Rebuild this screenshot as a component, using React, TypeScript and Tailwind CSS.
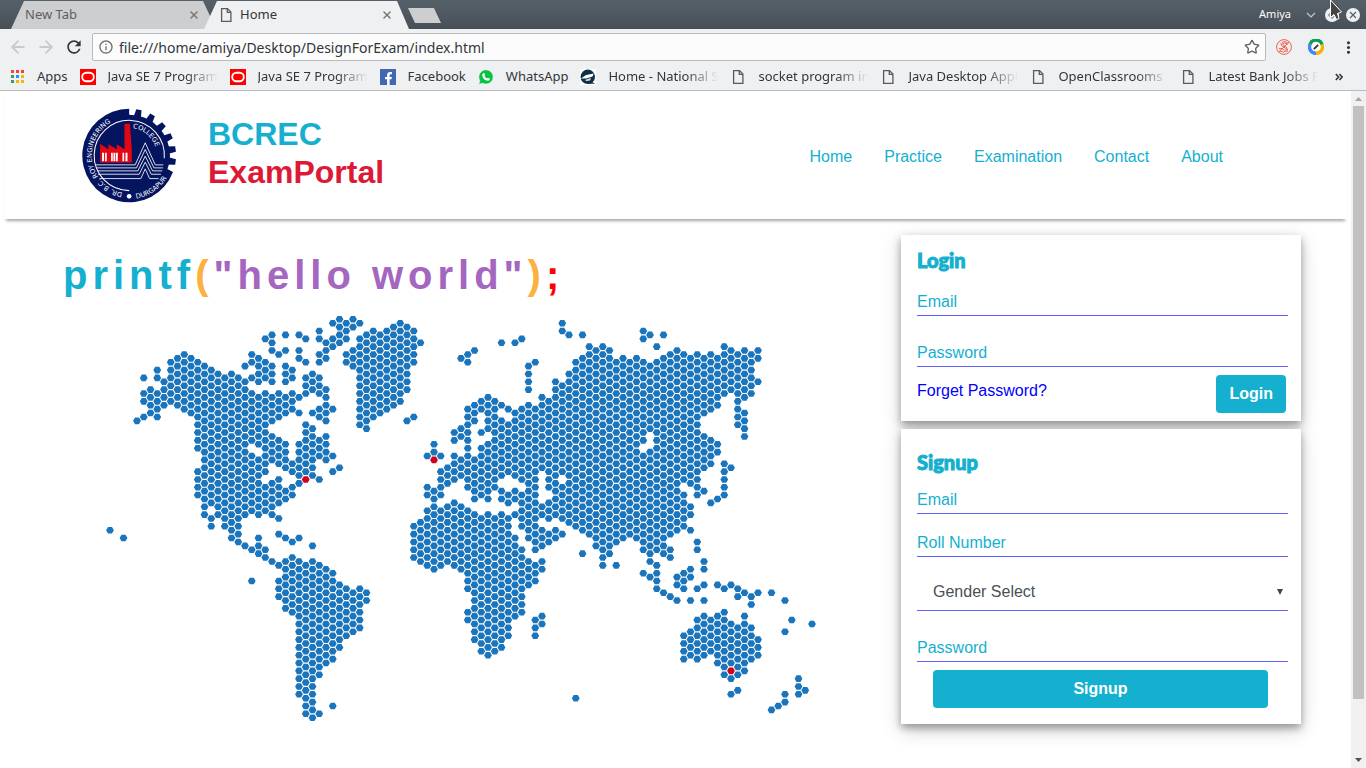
import type { ReactNode } from "react";
import { ArrowLeft, ArrowRight, Star, X } from "lucide-react";
import { FaFacebookF } from "react-icons/fa";
import { MdInfoOutline, MdRefresh, MdMoreVert } from "react-icons/md";

/* Map cells by column: "column: from-to" half rows, stepping by two. */
const LAND = `
0:54;2:56;4:26;5:15,19-21,25;6:18-24;7:13-15,19-25;8:16-22;9:11-21;10:10-22;11:9-23;12:10-24;
13:11-33,39-45;14:12-50;15:13-47,51-53;16:14-50;17:15-53;18:14-56;19:15-57;20:12,16-50,58;
21:9-11,15,19-31,35-49,59,67;22:10-16,20-32,36-50,56-60;23:5,11-15,19-39,43-49,59-61;
24:4-8,12-16,20-26,30-36,42-50,62;25:9,19-25,31-37,41-47,51,55,63,67-71;
26:4,8,12-16,20-24,32-38,44-46,56,62-74;27:13-15,19-23,37-39,43-45,57,61-75;
28:4,8-10,20,24,32-42,56,62-96;29:5,11,15-19,27-39,63-101;30:14-18,24,28-40,58,62-102;
31:3-5,9-11,15-19,23-25,31-35,41,63-91,101;32:6-10,18-26,30-36,64-88;33:1,5-7,23,35,39,65-87,99;
34:0-6,38,68-84;35:1-5,9-11,69-81;36:0-2,8-12,70-80;37:1,5-27,69-79;38:4-28,70-72;39:3-25;40:4-24;
41:3-23;42:2-22;43:1-21;44:2-18,26;45:3-11,25,53-61;46:6,52-62;47:35,43-45,49-63;48:32-34,44-64;
49:35,39-45,49-63;50:38-42,48-62;51:29-31,35-41,47-63;52:10,28-30,36-40,48-64;
53:9-11,23-43,49-69,75-77;54:8,22-26,36-46,50-82;55:21-23,29,33-45,51-85;56:20-28,32-46,50-86;
57:21-43,51-85;58:6,22,26-40,44-46,50-84;59:23,27-39,45-47,51-81;60:6,24-40,44-46,50,56-76;
61:5,23-41,45-53,59-75;62:12-18,22-56,62-68;63:11,23-59,63-67,77-81;64:20-38,48-50,54-58,62-64,76-78;
65:21-43,47-51,55-57;66:16-50,54-56;67:1-3,17-39,43-51,55;68:4,14-52;69:11-53,97;70:4,10-54,60;71:7-55;
72:8-58;73:7-63;74:8-60;75:11-57,63;76:10-56;77:11-55;78:10-56;79:3-5,11-31,35-59,65;
80:4,12-28,34-62,66;81:7,11-59,63-69;82:4,10-60,70;83:9-55,59-61,71;84:8-54,66-68,72;
85:9-41,45-53,65-69,81-87;86:10-42,48-50,54,64-66,72,80-86;87:9-41,43-45,57-59,69,77-87;
88:10-24,30-38,44,62-64,68,72,76-86;89:9-23,31-37,47,77-85;90:10-22,32-34,46,68,76-88;
91:7-19,37-45,69,75-91;92:8-18,38,68,78-88,92,96;93:9-27,69-71,79-91,95;94:8-20,24-30,70,76-90;
95:9-19,71-73,79-87;96:8-10,16,70,82-86;98:70,100;99:99;100:72,80,96-98;101:77;102:92-96;103:95;104:78`;

const CITIES: [number, number][] = [
  [29, 41],
  [48, 36],
  [92, 90],
];

const cell = (col: number, half: number) => {
  const x = (4 + col * 6.75).toFixed(2);
  const y = (4.3 + half * 3.906).toFixed(2);
  return `M${x} ${y}m-3.9 0l1.9 -3.3h4l1.9 3.3l-1.9 3.3h-4z`;
};

const landPath = LAND.replace(/\s/g, "")
  .split(";")
  .flatMap((entry) => {
    const [col, runs] = entry.split(":");
    return runs.split(",").flatMap((run) => {
      const [from, to = from] = run.split("-").map(Number);
      const cells: string[] = [];
      for (let half = from; half <= to; half += 2) cells.push(cell(Number(col), half));
      return cells;
    });
  })
  .join("");

function WorldMap() {
  return (
    <svg viewBox="0 0 710 408" className="block w-full" role="img" aria-label="World map">
      <path d={landPath} fill="#1b75bc" />
      <path d={CITIES.map(([c, h]) => cell(c, h)).join("")} fill="#d0021b" />
    </svg>
  );
}

const TEETH = [-78, -60, -42, -25, -8, 8];

function CollegeLogo() {
  return (
    <svg viewBox="0 0 284 284" className="size-[95px] shrink-0" role="img" aria-label="College logo">
      <g fill="#04145f">
        <circle cx="141" cy="142" r="122" />
        <path d="M141 2A140 140 0 1 0 272 191L255 182L141 142Z" />
        {TEETH.map((a) => (
          <path key={a} d="M250 130L281 134V150L250 154Z" transform={`rotate(${a} 141 142)`} />
        ))}
      </g>
      <path d="M141 247A105 105 0 1 1 246 150" fill="none" stroke="#fff" strokeWidth="3" />
      <circle cx="141" cy="264" r="7" fill="#fff" />
      <g fill="none" stroke="#fff" strokeWidth="2.5">
        <path d="M42 170H159L189 104L219 170H243" />
        <path d="M43 179H163L189 124L215 179H242" />
        <path d="M45 188H167L189 144L211 188H240" />
        <path d="M48 198H171L189 162L207 198H236" />
        <path d="M52 211H176L189 182L202 211H229" />
      </g>
      <path
        d="M54 163V107L79 123V108L104 123V108L127 123V47H143L149 125V163Z"
        fill="#e30613"
      />
      <path
        d="M60 134h6v25h-6zM69 134h5v25h-5zM87 134h5v25h-5zM94 134h5v25h-5zM101 134h6v25h-6zM121 134h5v25h-5zM130 134h6v25h-6z"
        fill="#fff"
      />
      <path id="ring-left" d="M121 253A113 113 0 0 1 141 29" fill="none" />
      <path id="ring-inner" d="M152 60A83 83 0 0 1 224 142" fill="none" />
      <path id="ring-low" d="M162 271A131 131 0 0 0 270 164" fill="none" />
      <g fill="#fff" className="font-['DejaVu_Sans']">
        <text fontSize="20">
          <textPath href="#ring-left">DR. B.C. ROY ENGINEERING</textPath>
        </text>
        <text fontSize="20">
          <textPath href="#ring-inner">COLLEGE</textPath>
        </text>
        <text fontSize="20">
          <textPath href="#ring-low">DURGAPUR</textPath>
        </text>
      </g>
    </svg>
  );
}

function PageIcon() {
  return (
    <svg viewBox="0 0 16 16" className="size-4 shrink-0" fill="none" stroke="#5a5a5a" strokeWidth="1.3">
      <path d="M3.6 1.6H9.5L12.9 5V14.4H3.6Z" />
      <path d="M9.3 1.8V5.3H12.7" />
    </svg>
  );
}

function OracleIcon() {
  return (
    <svg viewBox="0 0 16 16" className="size-4 shrink-0">
      <path d="M0 0H16V16H0Z" fill="#f00" />
      <rect x="2.2" y="3.8" width="11.6" height="8.4" rx="4.2" fill="none" stroke="#fff" strokeWidth="1.9" />
    </svg>
  );
}

function FacebookIcon() {
  return (
    <span className="flex size-4 shrink-0 items-end justify-end overflow-hidden bg-[#4267b2] pr-px">
      <FaFacebookF className="size-[13px] text-white" />
    </span>
  );
}

function WhatsAppIcon() {
  return (
    <svg viewBox="0 0 16 16" className="size-4 shrink-0">
      <path d="M8 .7A7.2 7.2 0 0 1 8 15.1Q6 15.1 4.5 14.3L.7 15.4L1.8 11.7A7.3 7.3 0 0 1 8 .7Z" fill="#0ac144" stroke="#fff" strokeWidth=".6" />
      <path d="M5.3 4.2L6.3 4.1L7.1 6L6.4 6.9Q7.3 8.7 9.2 9.5L10 8.7L11.9 9.7Q12 11.5 10 11.8Q5 11.3 4.2 6.3Q4.3 4.8 5.3 4.2Z" fill="#fff" />
    </svg>
  );
}

function ScholarIcon() {
  return (
    <svg viewBox="0 0 16 16" className="size-4 shrink-0">
      <path d="M0 0H16V16H0Z" fill="#fff" />
      <circle cx="7.8" cy="7.8" r="7.2" fill="#0c3044" />
      <path d="M10 12L15.3 14.8H8Z" fill="#0c3044" />
      <path d="M1 9.5L6 6L13.8 4.4L12.5 7.4L6.5 9.6Z" fill="#fff" />
      <path d="M5 11L11 9L10 11.5L6.5 12Z" fill="#dfe6ea" />
    </svg>
  );
}

function AppsIcon() {
  const colors = ["#f44336", "#f44336", "#f44336", "#34a05a", "#2090ff", "#ffb300", "#34a05a", "#ffb300", "#ffb300"];
  return (
    <svg viewBox="0 0 16 16" className="size-4 shrink-0">
      {colors.map((c, i) => (
        <rect key={i} x={2 + (i % 3) * 5} y={1 + Math.floor(i / 3) * 5} width="3" height="3" fill={c} />
      ))}
    </svg>
  );
}

const bookmarks: { title: string; icon: ReactNode; clipped?: boolean }[] = [
  { title: "Apps", icon: <AppsIcon /> },
  { title: "Java SE 7 Programm", icon: <OracleIcon />, clipped: true },
  { title: "Java SE 7 Programm", icon: <OracleIcon />, clipped: true },
  { title: "Facebook", icon: <FacebookIcon /> },
  { title: "WhatsApp", icon: <WhatsAppIcon /> },
  { title: "Home - National Sc", icon: <ScholarIcon />, clipped: true },
  { title: "socket program in", icon: <PageIcon />, clipped: true },
  { title: "Java Desktop Appli", icon: <PageIcon />, clipped: true },
  { title: "OpenClassrooms -", icon: <PageIcon />, clipped: true },
  { title: "Latest Bank Jobs R", icon: <PageIcon />, clipped: true },
];

function TabStrip() {
  return (
    <div className="relative flex h-[29px] items-stretch bg-linear-to-b from-[#566069] to-[#475057] pl-[11px] text-[13px]">
      <div className="flex w-[200px] items-center bg-[#cdced0] pt-px pr-[11px] pl-3.5 text-[#5b5f63] [clip-path:polygon(13px_1px,192px_1px,200px_18px,200px_100%,0_100%)]">
        <span className="flex-1">New Tab</span>
        <button aria-label="Close New Tab">
          <X className="size-3 text-[#777]" strokeWidth={3} />
        </button>
      </div>
      <div className="-ml-[7px] flex w-[205px] items-center gap-1.5 bg-[#eff0f2] pt-px pr-4 pl-3.5 text-[#31363b] [clip-path:polygon(13px_1px,193px_1px,205px_100%,0_100%)]">
        <PageIcon />
        <span className="flex-1">Home</span>
        <button aria-label="Close Home">
          <X className="size-3 text-[#777]" strokeWidth={3} />
        </button>
      </div>
      <button
        aria-label="New tab"
        className="mt-2 -ml-px h-[15px] w-[33px] bg-[#cdced0] [clip-path:polygon(0_0,26px_0,33px_100%,7px_100%)]"
      />
      <div className="flex flex-1 items-center justify-end gap-[7px] pr-1.5">
        <span className="mr-1.5 text-[11px] text-white">Amiya</span>
        <svg viewBox="0 0 14 14" className="size-3.5" fill="none">
          <path d="M3 5L7 9L11 5" stroke="#c4c9cd" strokeWidth="1.2" />
        </svg>
        <svg viewBox="0 0 14 14" className="size-3.5">
          <circle cx="7" cy="7" r="7" fill="#eff0f1" />
          <path d="M7 3.5L10.5 7L7 10.5L3.5 7Z" fill="none" stroke="#566069" />
        </svg>
        <svg viewBox="0 0 14 14" className="size-3.5">
          <circle cx="7" cy="7" r="7" fill="#eff0f1" />
          <path d="M4 4L10 10M10 4L4 10" stroke="#566069" strokeWidth="1.2" />
        </svg>
      </div>
      <svg viewBox="0 0 14 22" className="absolute top-0 right-[23px] h-[22px] w-3.5">
        <path d="M1.5 0V17.5L5 14.5L7.5 19.5L10 18.5L8.5 13.5L12.5 12Z" fill="#444" stroke="#fff" />
      </svg>
    </div>
  );
}

function Toolbar() {
  return (
    <div className="flex h-9 items-center px-2 text-[#31363b]">
      <button aria-label="Back" className="mr-2">
        <ArrowLeft className="size-5 text-[#cacbcd]" strokeWidth={2.2} />
      </button>
      <button aria-label="Forward" className="mr-2">
        <ArrowRight className="size-5 text-[#cacbcd]" strokeWidth={2.2} />
      </button>
      <button aria-label="Reload" className="mr-2">
        <MdRefresh className="size-5" />
      </button>
      <div className="flex h-7 flex-1 items-center gap-1 rounded-xs border border-[#b9babc] bg-[#fcfcfc] px-[5px]">
        <MdInfoOutline className="mr-px size-4 text-[#6f7173]" />
        <input
          aria-label="Address"
          defaultValue="file:///home/amiya/Desktop/DesignForExam/index.html"
          className="min-w-0 flex-1 bg-transparent text-[14px] outline-none"
        />
        <button aria-label="Bookmark this page">
          <Star className="size-4 text-[#5f6163]" />
        </button>
      </div>
      <svg viewBox="0 0 16 16" className="ml-2.5 size-4" fill="none" stroke="#f0604d">
        <circle cx="8" cy="8" r="7.4" strokeWidth="1" />
        <path d="M11.5 3.5Q7 1.5 5 4.5Q4.500 7 8 8Q11.500 9.500 10 12Q8 14 4 12M12 5Q8 3 6.500 5Q7 6.500 9.500 7.500Q12.500 9.500 11 13M3 9.500Q6 9 8.500 11M2.500 13L13.500 3" />
      </svg>
      <svg viewBox="0 0 16 16" className="ml-4 size-4" fill="none" strokeWidth="3.4">
        <circle cx="8" cy="8" r="5" fill="#fff" />
        <path d="M2 5.500A6.300 6.300 0 0 1 14 5.500" stroke="#0f9d58" />
        <path d="M2 5.500A6.300 6.300 0 0 0 8 14.300" stroke="#4285f4" />
        <path d="M14 5.500A6.300 6.300 0 0 1 8 14.300" stroke="#f4b400" />
        <path d="M5.800 10.200L10.200 5.800" stroke="#333" strokeWidth="1.8" />
      </svg>
      <button aria-label="Menu" className="ml-[15px]">
        <MdMoreVert className="size-[19px]" />
      </button>
    </div>
  );
}

function BookmarkBar() {
  return (
    <nav aria-label="Bookmarks" className="flex h-[26px] items-center border-b border-[#b9babc] pr-[23px] pb-0.5 pl-[9px] text-[13px] text-[#31363b]">
      <ul className="flex min-w-0 flex-1 items-center gap-3 overflow-hidden">
        {bookmarks.map((b, i) => (
          <li key={i} className="shrink-0">
            <a href="#" className="flex items-center gap-3">
              {b.icon}
              <span
                className={
                  b.clipped
                    ? "w-[110px] overflow-hidden whitespace-nowrap [mask-image:linear-gradient(to_right,#000_78px,transparent_110px)]"
                    : "whitespace-nowrap"
                }
              >
                {b.title}
              </span>
            </a>
          </li>
        ))}
      </ul>
      <button aria-label="More bookmarks">
        <svg viewBox="0 0 8 8" className="size-2" fill="none" stroke="#31363b" strokeWidth="1.6">
          <path d="M.8 1L3.600 4L.8 7M4.400 1L7.200 4L4.400 7" />
        </svg>
      </button>
    </nav>
  );
}

function SiteHeader() {
  return (
    <header className="mx-1 flex h-32 items-center pr-[124px] pl-[78px] shadow-[0_4px_3px_-2px_rgba(0,0,0,0.35)]">
      <CollegeLogo />
      <h1 className="ml-[31px] flex-1 pb-1 text-[32px] leading-[38px] font-bold text-[#15b0cf]">
        BCREC
        <span className="block text-[#dc1a36]">ExamPortal</span>
      </h1>
      <nav aria-label="Main" className="flex gap-8 pt-1 text-base text-[#15b0cf]">
        {["Home", "Practice", "Examination", "Contact", "About"].map((item) => (
          <a key={item} href="#">
            {item}
          </a>
        ))}
      </nav>
    </header>
  );
}

function Field({ label, type = "text", className }: { label: string; type?: string; className: string }) {
  return (
    <input
      type={type}
      aria-label={label}
      placeholder={label}
      className={`block h-7 w-full border-b border-[#6161ff] bg-transparent text-base outline-none placeholder:text-[#15b0cf] ${className}`}
    />
  );
}

function CardTitle({ children }: { children: ReactNode }) {
  return (
    <h2 className="font-[Lato,sans-serif] text-[20px] leading-7 font-black text-[#15b0cf] [-webkit-text-stroke:1px_#15b0cf]">
      {children}
    </h2>
  );
}

const cardShadow = "shadow-[0_4px_8px_rgba(0,0,0,0.35),0_6px_20px_rgba(0,0,0,0.16)]";

function LoginCard() {
  return (
    <form className={`bg-white pt-[11px] pr-[13px] pb-2 pl-4 ${cardShadow}`}>
      <CardTitle>Login</CardTitle>
      <Field label="Email" type="email" className="mt-3.5" />
      <Field label="Password" type="password" className="mt-[23px]" />
      <div className="mt-2 mr-0.5 flex items-start justify-between">
        <a href="#" className="pt-1 text-base text-[#00f]">
          Forget Password?
        </a>
        <button type="button" className="h-[38px] rounded bg-[#15b0cf] px-[13px] text-base font-bold text-white">
          Login
        </button>
      </div>
    </form>
  );
}

function SignupCard() {
  return (
    <form className={`bg-white pt-[19px] pr-[13px] pb-4 pl-4 ${cardShadow}`}>
      <CardTitle>Signup</CardTitle>
      <Field label="Email" type="email" className="mt-2.5" />
      <Field label="Roll Number" className="mt-[15px]" />
      <div className="relative mt-4">
        <select
          aria-label="Gender"
          defaultValue=""
          className="block h-[38px] w-full appearance-none border-b border-[#6161ff] bg-transparent pl-4 text-base text-[#495057] outline-none"
        >
          <option value="">Gender Select</option>
          <option>Male</option>
          <option>Female</option>
        </select>
        <svg viewBox="0 0 6 6" className="pointer-events-none absolute top-4 right-[5px] size-1.5">
          <path d="M0 0H6L3 6Z" fill="#3f474e" />
        </svg>
      </div>
      <Field label="Password" type="password" className="mt-[23px]" />
      <div className="mt-2 pr-5 pl-4">
        <button type="button" className="h-[38px] w-full rounded bg-[#15b0cf] text-base font-bold text-white">
          Signup
        </button>
      </div>
    </form>
  );
}

function Scrollbar() {
  return (
    <div aria-hidden="true" className="flex w-[15px] shrink-0 flex-col items-center bg-[#f1f1f1]">
      <svg viewBox="0 0 15 15" className="size-[15px]">
        <path d="M4 10H11L7.500 6Z" fill="#a3a3a3" />
      </svg>
      <div className="flex w-full flex-1 flex-col px-0.5">
        <div className="w-full grow-[593] bg-[#c1c1c1]" />
        <div className="grow-[54]" />
      </div>
      <svg viewBox="0 0 15 15" className="size-[15px]">
        <path d="M4 5H11L7.500 9Z" fill="#505050" />
      </svg>
    </div>
  );
}

export default function App() {
  return (
    <div className="flex h-screen flex-col overflow-hidden bg-white">
      <div className="bg-[#eff0f2] font-['Noto_Sans',sans-serif]">
        <TabStrip />
        <Toolbar />
        <BookmarkBar />
      </div>
      <div className="flex min-h-0 flex-1 font-['Liberation_Sans',Arial,sans-serif]">
        <div className="min-w-0 flex-1 overflow-hidden">
          <SiteHeader />
          <main className="flex justify-between pt-4 pr-[50px] pl-[63px]">
            <section className="w-[753px] pt-4">
              <h2 className="text-[40px] leading-12 font-bold tracking-[5px] text-[#15b0cf]">
                printf<span className="text-[#fbb040]">(</span>
                <span className="text-[#a566bf]">"hello world"</span>
                <span className="text-[#fbb040]">)</span>
                <span className="text-[#f00]">;</span>
              </h2>
              <div className="mt-4 pl-[43px]">
                <WorldMap />
              </div>
            </section>
            <aside className="flex w-[400px] flex-col gap-2">
              <LoginCard />
              <SignupCard />
            </aside>
          </main>
        </div>
        <Scrollbar />
      </div>
    </div>
  );
}
